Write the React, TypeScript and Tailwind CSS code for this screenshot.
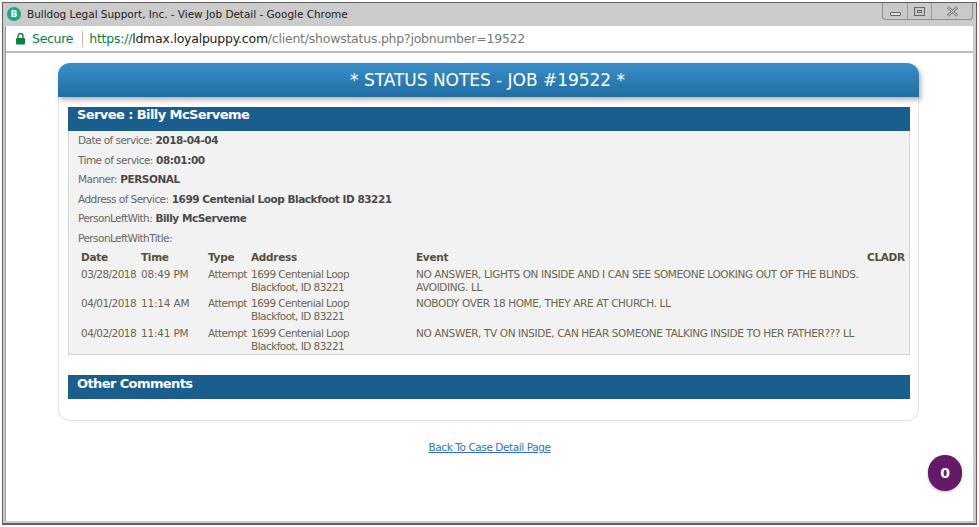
const font = { fontFamily: '"DejaVu Sans", sans-serif' };

const fields: [string, string][] = [
  ["Date of service:", "2018-04-04"],
  ["Time of service:", "08:01:00"],
  ["Manner:", "PERSONAL"],
  ["Address of Service:", "1699 Centenial Loop Blackfoot ID 83221"],
  ["PersonLeftWith:", "Billy McServeme"],
  ["PersonLeftWithTitle:", ""],
];

const rows = [
  ["03/28/2018", "08:49 PM", "NO ANSWER, LIGHTS ON INSIDE AND I CAN SEE SOMEONE LOOKING OUT OF THE BLINDS. AVOIDING. LL"],
  ["04/01/2018", "11:14 AM", "NOBODY OVER 18 HOME, THEY ARE AT CHURCH. LL"],
  ["04/02/2018", "11:41 PM", "NO ANSWER, TV ON INSIDE, CAN HEAR SOMEONE TALKING INSIDE TO HER FATHER??? LL"],
];

function WindowControls() {
  return (
    <div className="flex h-[17px] w-[91px] rounded-b-[4px] border border-t-0 border-[#8e8e8e] bg-[#c9c9c9] text-[#555]">
      <div className="flex w-[25px] items-end justify-center border-r border-[#9a9a9a] pb-[3px]">
        <div className="h-[4px] w-[11px] rounded-[1px] border border-[#666] bg-[#ddd]" />
      </div>
      <div className="flex w-[24px] items-center justify-center border-r border-[#9a9a9a]">
        <div className="flex h-[9px] w-[11px] items-center justify-center border border-[#666]">
          <div className="h-[3px] w-[5px] border border-[#666]" />
        </div>
      </div>
      <div className="flex flex-1 items-center justify-center">
        <svg width="13" height="11" viewBox="0 0 12 10">
          <path d="M1.5 1 L10.5 9 M10.5 1 L1.5 9" stroke="#777" strokeWidth="2.4" fill="none" />
          <path d="M1.5 1 L10.5 9 M10.5 1 L1.5 9" stroke="#e2e2e2" strokeWidth="0.9" fill="none" />
        </svg>
      </div>
    </div>
  );
}

export default function App() {
  return (
    <div className="h-[527px] w-[979px] overflow-hidden bg-white pl-[2px] pr-[2px] pt-[2px]" style={font}>
      <div className="flex h-[523px] flex-col border border-[#5f5f5f] border-b-[2px] bg-[#cbcbcb]">
        {/* title bar */}
        <div className="flex h-[23px] shrink-0 items-start justify-between pr-[3px]">
          <div className="flex items-center pl-[4px] pt-[4px]">
            <div className="flex h-[14px] w-[14px] items-center justify-center rounded-full bg-[#16a98a] text-[9px] font-bold leading-none text-white">B</div>
            <span className="ml-[6px] text-[10.5px] leading-[14px] text-[#222] tracking-[-0.03px]">Bulldog Legal Support, Inc. - View Job Detail - Google Chrome</span>
          </div>
          <WindowControls />
        </div>
        {/* inner */}
        <div className="ml-[2px] mr-[3px] mb-[2px] flex min-h-0 flex-1 flex-col border-l border-[#9a9a9a] bg-white">
          <div className="flex h-[27px] shrink-0 items-center border-b-[2px] border-[#bcbcbc] bg-white pl-[9px] pt-[1px]">
            <svg width="11" height="13" viewBox="0 0 11 13" className="mb-[2px]">
              <path d="M3 6V4a2.5 2.5 0 0 1 5 0v2" stroke="#0b8043" strokeWidth="1.4" fill="none" />
              <rect x="1" y="6" width="9" height="6.5" rx="1" fill="#0b8043" />
            </svg>
            <span className="ml-[6px] text-[12.5px] leading-none text-[#0b8043] tracking-[-0.3px]">Secure</span>
            <div className="ml-[9px] h-[16px] w-px bg-[#bbb]" />
            <span className="ml-[6px] text-[12.5px] leading-none tracking-[-0.23px]">
              <span className="text-[#0b8043]">https://</span>
              <span className="text-[#222]">ldmax.loyalpuppy.com</span>
              <span className="text-[#777]">/client/showstatus.php?jobnumber=19522</span>
            </span>
          </div>
          <div className="relative min-h-0 flex-1 bg-white pl-[52px] pr-[54px] pt-[10px]">
            {/* card */}
            <div className="h-[358px] rounded-[12px] border border-[#e2e2e2] border-t-0 bg-white">
              <div className="-mx-px flex h-[34px] items-center justify-center rounded-t-[12px] bg-gradient-to-b from-[#3a8ec8] to-[#1f6ea3] pr-[2px] shadow-[2px_3px_5px_rgba(0,0,0,0.3)]">
                <span className="text-[17px] leading-none text-white tracking-[-0.03px]">* STATUS NOTES - JOB #19522 *</span>
              </div>
              <div className="pl-[9px] pr-[8px] pt-[10px]">
                <div className="h-[24px] bg-[#195e8d] pl-[9px] text-[13px] font-bold leading-[16px] text-white tracking-[-0.58px]">Servee : Billy McServeme</div>
                <div className="h-[224px] border border-t-0 border-[#d4d4d4] bg-[#f2f2f2] pl-[9px] pr-[5px] text-[10.5px] text-[#666]">
                  {fields.map(([k, v]) => (
                    <div key={k} className="flex h-[19.6px] items-center whitespace-pre tracking-[-0.55px]">
                      {k}
                      {v && <b className="text-[#4a4a4a] tracking-[-0.46px]"> {v}</b>}
                    </div>
                  ))}
                  <table className="mt-[2px] w-[828px] table-fixed border-collapse text-[10.5px] leading-[13px] text-[#6b6650] tracking-[-0.55px]">
                    <colgroup>
                      <col className="w-[60px]" /><col className="w-[67px]" /><col className="w-[43px]" />
                      <col className="w-[165px]" /><col className="w-[451px]" /><col />
                    </colgroup>
                    <thead>
                      <tr className="h-[17px] text-left font-bold text-[#55503c]">
                        {["Date", "Time", "Type", "Address", "Event", "CLADR"].map((h) => (
                          <th key={h} className="p-0 pl-[3px] align-top tracking-[-0.3px]">{h}</th>
                        ))}
                      </tr>
                    </thead>
                    <tbody>
                      {rows.map(([d, t, e]) => (
                        <tr key={d} className="h-[29.5px]">
                          <td className="p-0 pl-[3px] align-top">{d}</td>
                          <td className="p-0 pl-[3px] align-top tracking-[-0.2px]">{t}</td>
                          <td className="p-0 pl-[3px] align-top">Attempt</td>
                          <td className="p-0 pl-[3px] align-top">1699 Centenial Loop<br />Blackfoot, ID 83221</td>
                          <td className="p-0 pl-[3px] align-top tracking-[-0.38px]" colSpan={2}><div className="w-[450px]">{e}</div></td>
                        </tr>
                      ))}
                    </tbody>
                  </table>
                </div>
                <div className="mt-[20px] h-[24px] bg-[#195e8d] pl-[9px] pt-[1px] text-[13px] font-bold leading-[16px] text-white tracking-[-0.6px]">Other Comments</div>
              </div>
            </div>
            <div className="mt-[13px] pl-[2px] text-center">
              <a href="#" className="text-[10.5px] leading-[14px] text-[#2f6fe0] underline tracking-[-0.42px]">Back To Case Detail Page</a>
            </div>
            <div className="absolute bottom-[30px] right-[11px] flex h-[36px] w-[34px] items-center justify-center rounded-full bg-[#651a66] text-[14px] font-bold text-white shadow-[0_1px_3px_rgba(0,0,0,0.25)]">0</div>
          </div>
        </div>
      </div>
    </div>
  );
}
